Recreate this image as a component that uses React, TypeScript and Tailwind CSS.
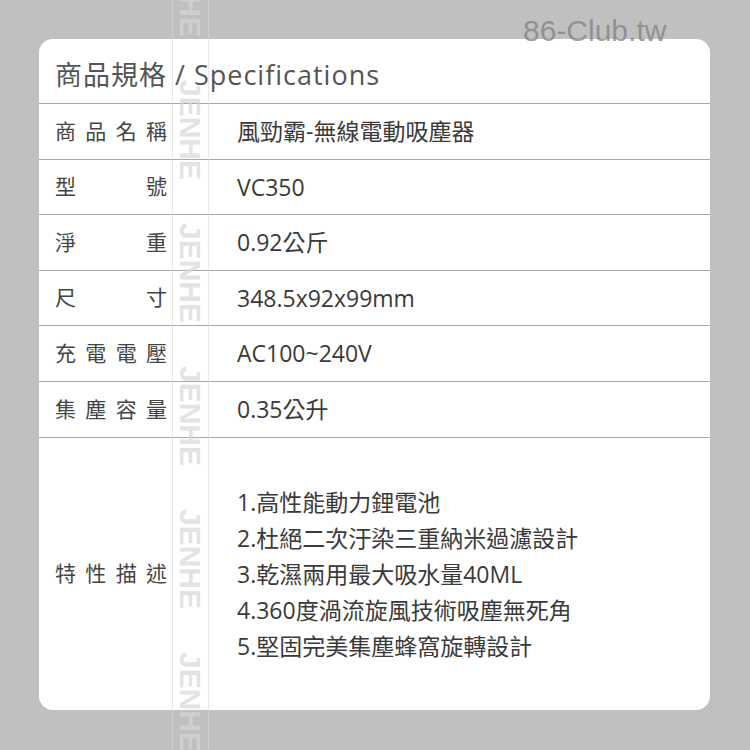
import React from "react";

const font = { fontFamily: '"Open Sans", "Noto Sans CJK TC", sans-serif' };

const rows: { label: string[]; value: string }[] = [
    { label: ["商", "品", "名", "稱"], value: "風勁霸-無線電動吸塵器" },
    { label: ["型", "號"], value: "VC350" },
    { label: ["淨", "重"], value: "0.92公斤" },
    { label: ["尺", "寸"], value: "348.5x92x99mm" },
    { label: ["充", "電", "電", "壓"], value: "AC100~240V" },
    { label: ["集", "塵", "容", "量"], value: "0.35公升" },
];

const features = [
    "1.高性能動力鋰電池",
    "2.杜絕二次汙染三重納米過濾設計",
    "3.乾濕兩用最大吸水量40ML",
    "4.360度渦流旋風技術吸塵無死角",
    "5.堅固完美集塵蜂窩旋轉設計",
];

function Label({ chars }: { chars: string[] }) {
    return (
        <div className="w-[112px] flex justify-between text-[21px] text-[#444]">
            {chars.map((c, i) => (
                <span key={i}>{c}</span>
            ))}
        </div>
    );
}

export default function App() {
    return (
        <div className="relative w-[750px] h-[750px] overflow-hidden bg-[#c0c0c0] pt-[39px] pl-[39px]" style={font}>
            <div className="w-[671px] h-[671px] bg-white rounded-[14px] flex flex-col overflow-hidden">
                <div className="h-[65px] shrink-0 border-b border-[#a8a8a8] pl-[16px] pt-[16px] text-[27px] leading-[40px] text-[#555] tracking-[1px]">
                    商品規格 / Specifications
                </div>
                {rows.map((r, i) => (
                    <div key={i} className="h-[55.6px] shrink-0 border-b border-[#a8a8a8] flex items-center pl-[16px]">
                        <Label chars={r.label}/>
                        <div className="ml-[70px] text-[23px] text-[#3a3a3a]">{r.value}</div>
                    </div>
                ))}
                <div className="flex-1 flex items-center pl-[16px]">
                    <Label chars={["特", "性", "描", "述"]}/>
                    <div className="ml-[70px] flex flex-col text-[23px] leading-[36px] text-[#3a3a3a]">
                        {features.map((f, i) => (
                            <div key={i}>{f}</div>
                        ))}
                    </div>
                </div>
            </div>

            {/* vertical watermark strip */}
            <div className="absolute top-0 left-[172px] w-[37px] h-full border-x border-[#d8d8d8]/60 overflow-hidden">
                <div className="absolute top-[-63px] left-0 w-full flex flex-col items-center gap-[43px]">
                    {[0, 1, 2, 3, 4, 5].map((i) => (
                        <span key={i}
                              className="[writing-mode:vertical-rl] text-[30px] leading-[37px] font-bold text-[#d7d7d7]/70"
                              style={{ fontFamily: '"Liberation Sans", Arial, sans-serif' }}>
                            JENHE
                        </span>
                    ))}
                </div>
            </div>

            <div className="absolute top-[16px] left-[523px] text-[30px] leading-[30px] text-[#808080]/75"
                 style={{ fontFamily: '"Liberation Sans", Arial, sans-serif' }}>
                86-Club.tw
            </div>
        </div>
    );
}
